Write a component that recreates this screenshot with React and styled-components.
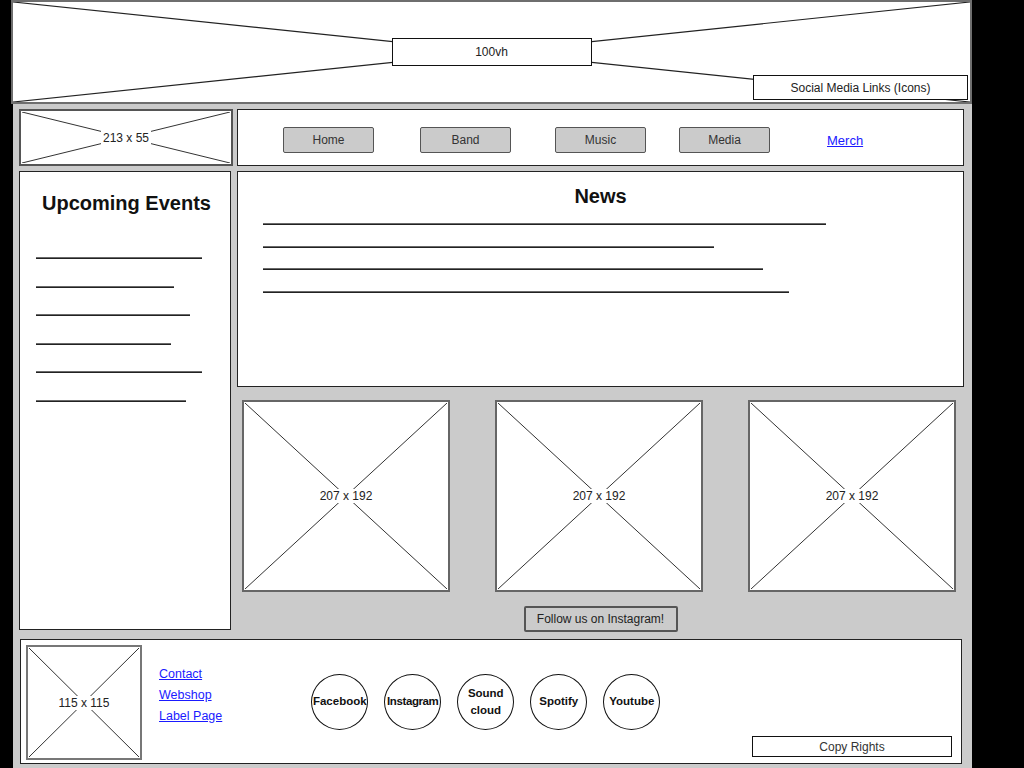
import React from 'react';
import styled, { createGlobalStyle } from 'styled-components';

const GlobalStyle = createGlobalStyle`
  html, body { margin: 0; padding: 0; background: #000; }
  body { font-family: "Liberation Sans", Arial, sans-serif; }
  #root { width: 1024px; height: 768px; overflow: hidden; }
  * { box-sizing: border-box; }
`;

const Page = styled.div`
  width: 1024px;
  height: 768px;
  background: #000;
  padding-left: 11px;
  display: flex;
  flex-direction: column;
`;

const Hero = styled.header`
  position: relative;
  width: 961px;
  height: 104px;
  flex: none;
  background: #fff;
  border: 2px solid #6e6e6e;
  display: flex;
  align-items: center;
  justify-content: center;
`;

const Cross = styled.svg`
  position: absolute;
  inset: 0;
  width: 100%;
  height: 100%;
`;

const HeroLabel = styled.div`
  position: relative;
  width: 200px;
  height: 28px;
  background: #fff;
  border: 1px solid #111;
  display: flex;
  align-items: center;
  justify-content: center;
  font-size: 12px;
  color: #222;
`;

const SocialBox = styled.div`
  position: absolute;
  right: 2px;
  bottom: 2px;
  width: 215px;
  height: 25px;
  background: #fff;
  border: 1px solid #111;
  display: flex;
  align-items: center;
  justify-content: center;
  font-size: 12px;
  color: #222;
`;

const Panel = styled.main`
  flex: 1;
  margin-left: 2px;
  width: 959px;
  background: #cbcbcb;
  padding: 5px 8px 0 6px;
  display: flex;
  flex-direction: column;
`;

const TopRow = styled.div`
  display: flex;
  gap: 4px;
  height: 57px;
`;

const LogoBox = styled.div`
  width: 214px;
  background: #fff;
  border: 2px solid #555;
  padding: 1px;
`;

const Nav = styled.nav`
  flex: 1;
  background: #fff;
  border: 1px solid #222;
  display: flex;
  align-items: center;
  padding-top: 5px;
`;

const NavButton = styled.div`
  width: 91px;
  height: 26px;
  margin-left: ${(p) => p.$ml}px;
  background: #cbcbcb;
  border: 1.5px solid #555;
  border-radius: 2px;
  display: flex;
  align-items: center;
  justify-content: center;
  font-size: 12px;
  color: #333;
`;

const NavLink = styled.a`
  margin-left: ${(p) => p.$ml}px;
  font-size: 13px;
  color: #1a1aff;
  text-decoration: underline;
`;

const MidRow = styled.div`
  display: flex;
  gap: 6px;
  margin-top: 5px;
`;

const Events = styled.aside`
  width: 212px;
  height: 459px;
  background: #fff;
  border: 1px solid #222;
  padding: 19px 0 0 16px;
  display: flex;
  flex-direction: column;
`;

const Heading = styled.h2`
  margin: 0;
  font-family: "Liberation Sans", Arial, sans-serif;
  font-weight: bold;
  font-size: 20px;
  line-height: 24px;
  color: #111;
  text-align: center;
  padding-right: ${(p) => p.$pr || 0}px;
`;

const EventList = styled.div`
  display: flex;
  flex-direction: column;
  gap: 26.5px;
  margin-top: 42px;
`;

const TextLine = styled.div`
  height: 2px;
  background: #6a6a6a;
  border-bottom: 0.5px solid #222;
`;

const MainCol = styled.div`
  flex: 1;
  display: flex;
  flex-direction: column;
`;

const News = styled.section`
  height: 216px;
  background: #fff;
  border: 1px solid #222;
  padding: 12px 0 0 25px;
  display: flex;
  flex-direction: column;
`;

const NewsList = styled.div`
  display: flex;
  flex-direction: column;
  gap: 20.5px;
  margin-top: 15px;
`;

const Cards = styled.div`
  display: flex;
  justify-content: space-between;
  margin-top: 13px;
  padding: 0 8px 0 5px;
`;

const Card = styled.div`
  width: 208px;
  height: 192px;
  background: #fff;
  border: 2px solid #666;
  padding: 1px;
`;

const FollowButton = styled.div`
  align-self: center;
  margin-top: 14px;
  width: 154px;
  height: 26px;
  background: #cbcbcb;
  border: 2px solid #555;
  border-radius: 2px;
  display: flex;
  align-items: center;
  justify-content: center;
  font-size: 12px;
  color: #222;
`;

const Footer = styled.footer`
  margin-top: 7px;
  margin-left: 1px;
  width: 942px;
  height: 125px;
  background: #fff;
  border: 1px solid #222;
  padding: 5px;
  display: flex;
  align-items: center;
`;

const FooterImage = styled.div`
  width: 116px;
  height: 115px;
  flex: none;
  border: 2px solid #777;
  padding: 1px;
  align-self: flex-start;
`;

const LinkCol = styled.div`
  display: flex;
  flex-direction: column;
  margin-left: 17px;
  margin-top: -13px;
`;

const FooterLink = styled.a`
  font-size: 12.5px;
  line-height: 21px;
  color: #1a1aff;
  text-decoration: underline;
`;

const Circles = styled.div`
  display: flex;
  gap: 16px;
  margin-left: 89px;
`;

const Circle = styled.div`
  width: 57px;
  height: 56px;
  border: 1.5px solid #111;
  border-radius: 50%;
  display: flex;
  align-items: center;
  justify-content: center;
  text-align: center;
  font-weight: bold;
  font-size: 11.5px;
  line-height: 17px;
  color: #111;
  white-space: pre-line;
  letter-spacing: ${(p) => (p.$tight ? '-0.4px' : '0')};
`;

const CopyBox = styled.div`
  margin-left: auto;
  margin-right: 4px;
  margin-bottom: 1px;
  align-self: flex-end;
  width: 200px;
  height: 21px;
  border: 1px solid #111;
  display: flex;
  align-items: center;
  justify-content: center;
  font-size: 12px;
  color: #333;
`;

const PhWrap = styled.div`
  position: relative;
  width: 100%;
  height: 100%;
  display: flex;
  align-items: center;
  justify-content: center;
`;

const PhLabel = styled.span`
  position: relative;
  background: #fff;
  padding: 0 2px;
  font-size: 12px;
  color: #222;
`;

function Placeholder({ label }) {
  return (
    <PhWrap>
      <Cross preserveAspectRatio="none" viewBox="0 0 100 100">
        <line x1="0" y1="0" x2="100" y2="100" stroke="#333" strokeWidth="1" vectorEffect="non-scaling-stroke" />
        <line x1="100" y1="0" x2="0" y2="100" stroke="#333" strokeWidth="1" vectorEffect="non-scaling-stroke" />
      </Cross>
      <PhLabel>{label}</PhLabel>
    </PhWrap>
  );
}

const eventLines = [166, 138, 154, 135, 166, 150];
const newsLines = [563, 451, 500, 526];
const navItems = [
  { label: 'Home', ml: 45 },
  { label: 'Band', ml: 46 },
  { label: 'Music', ml: 44 },
  { label: 'Media', ml: 33 },
];
const socials = ['Facebook', 'Instagram', 'Sound\ncloud', 'Spotify', 'Youtube'];

export default function App() {
  return (
    <>
      <GlobalStyle />
      <Page>
        <Hero>
          <Cross preserveAspectRatio="none" viewBox="0 0 100 100">
            <line x1="0" y1="0" x2="100" y2="100" stroke="#222" strokeWidth="1.2" vectorEffect="non-scaling-stroke" />
            <line x1="100" y1="0" x2="0" y2="100" stroke="#222" strokeWidth="1.2" vectorEffect="non-scaling-stroke" />
          </Cross>
          <HeroLabel>100vh</HeroLabel>
          <SocialBox>Social Media Links (Icons)</SocialBox>
        </Hero>
        <Panel>
          <TopRow>
            <LogoBox>
              <Placeholder label="213 x 55" />
            </LogoBox>
            <Nav>
              {navItems.map((n) => (
                <NavButton key={n.label} $ml={n.ml}>{n.label}</NavButton>
              ))}
              <NavLink $ml={57}>Merch</NavLink>
            </Nav>
          </TopRow>
          <MidRow>
            <Events>
              <Heading $pr={13}>Upcoming Events</Heading>
              <EventList>
                {eventLines.map((w, i) => (
                  <TextLine key={i} style={{ width: w }} />
                ))}
              </EventList>
            </Events>
            <MainCol>
              <News>
                <Heading $pr={25}>News</Heading>
                <NewsList>
                  {newsLines.map((w, i) => (
                    <TextLine key={i} style={{ width: w }} />
                  ))}
                </NewsList>
              </News>
              <Cards>
                {[0, 1, 2].map((i) => (
                  <Card key={i}>
                    <Placeholder label="207 x 192" />
                  </Card>
                ))}
              </Cards>
              <FollowButton>Follow us on Instagram!</FollowButton>
            </MainCol>
          </MidRow>
          <Footer>
            <FooterImage>
              <Placeholder label="115 x 115" />
            </FooterImage>
            <LinkCol>
              <FooterLink>Contact</FooterLink>
              <FooterLink>Webshop</FooterLink>
              <FooterLink>Label Page</FooterLink>
            </LinkCol>
            <Circles>
              {socials.map((s) => (
                <Circle key={s} $tight={s === 'Instagram'}>{s}</Circle>
              ))}
            </Circles>
            <CopyBox>Copy Rights</CopyBox>
          </Footer>
        </Panel>
      </Page>
    </>
  );
}
